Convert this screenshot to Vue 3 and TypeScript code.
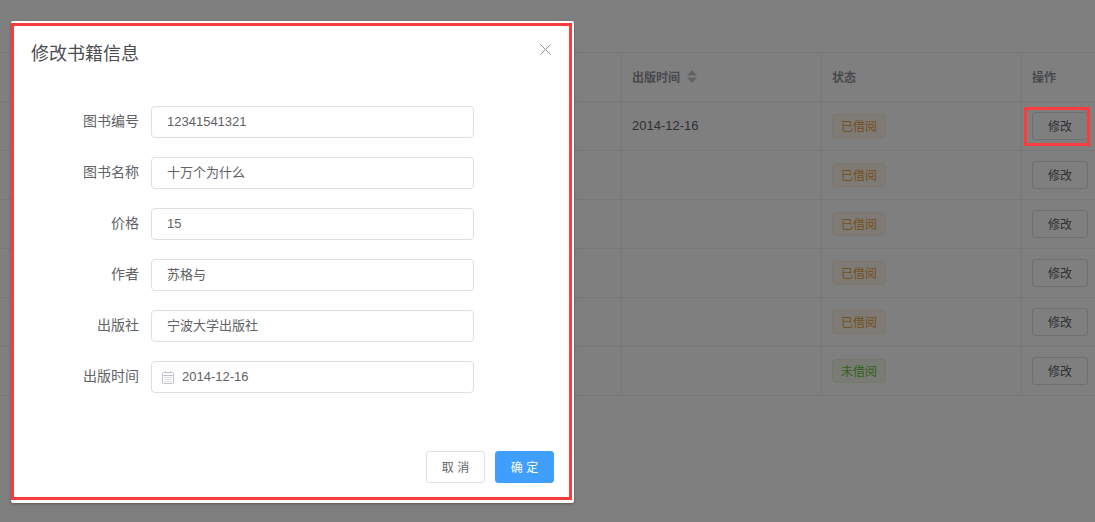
<script setup lang="ts">
interface Row { date: string; status: string; free: boolean }
const rows: Row[] = [
  { date: '2014-12-16', status: '已借阅', free: false },
  { date: '', status: '已借阅', free: false },
  { date: '', status: '已借阅', free: false },
  { date: '', status: '已借阅', free: false },
  { date: '', status: '已借阅', free: false },
  { date: '', status: '未借阅', free: true },
]
const fields = [
  { label: '图书编号', value: '12341541321', cjk: false },
  { label: '图书名称', value: '十万个为什么', cjk: true },
  { label: '价格', value: '15', cjk: false },
  { label: '作者', value: '苏格与', cjk: true },
  { label: '出版社', value: '宁波大学出版社', cjk: true },
]
</script>

<template>
  <div class="page">
    <div class="table">
      <div class="row head">
        <div class="cell"></div>
        <div class="cell">
          出版时间
          <svg class="sort" width="10" height="13" viewBox="0 0 10 13"><path d="M5 0 10 5.5H0zM5 13 0 7.5h10z" fill="#c0c4cc" /></svg>
        </div>
        <div class="cell">状态</div>
        <div class="cell">操作</div>
      </div>
      <div v-for="(r, i) in rows" :key="i" class="row">
        <div class="cell"></div>
        <div class="cell date">{{ r.date }}</div>
        <div class="cell"><span class="tag" :class="{ free: r.free }">{{ r.status }}</span></div>
        <div class="cell"><button class="edit" type="button">修改</button></div>
      </div>
    </div>

    <div class="mask"></div>

    <section class="dialog">
      <header class="dialog-head">
        <h2>修改书籍信息</h2>
        <svg class="close" width="11" height="11" viewBox="0 0 11 11"><path d="M.5.5l10 10M10.5.5l-10 10" stroke="#909399" stroke-width="1" fill="none" /></svg>
      </header>
      <form class="form">
        <label v-for="f in fields" :key="f.label" class="form-row">
          <span class="form-label">{{ f.label }}</span>
          <input class="input" :class="{ cjk: f.cjk }" :value="f.value" readonly />
        </label>
        <label class="form-row">
          <span class="form-label">出版时间</span>
          <span class="date-input">
            <svg class="cal" width="12" height="13" viewBox="0 0 12 13" fill="none" stroke="#c0c4cc">
              <rect x=".5" y="1.5" width="11" height="11" rx="1" />
              <path d="M.5 4.5h11M3 0v2M9 0v2" />
              <path d="M2.5 6.5h7M2.5 8.5h7M2.5 10.5h7" stroke-dasharray="1 1" />
            </svg>
            <span class="date-text">2014-12-16</span>
          </span>
        </label>
      </form>
      <footer class="dialog-foot">
        <button class="btn" type="button">取 消</button>
        <button class="btn primary" type="button">确 定</button>
      </footer>
    </section>

    <div class="mark mark-dialog"></div>
    <div class="mark mark-edit"></div>
  </div>
</template>

<style>
html, body { margin: 0; padding: 0; background: #fff; overflow: hidden; }
</style>

<style scoped>
.page {
  position: relative;
  width: 1095px;
  height: 522px;
  overflow: hidden;
  background: #fff;
  font-family: "Liberation Sans", "Noto Sans CJK SC", sans-serif;
  color: #606266;
  font-size: 14px;
}
.table {
  padding-top: 52px;
}
.row {
  display: grid;
  grid-template-columns: 622px 200px 200px 73px;
  height: 49px;
  box-sizing: border-box;
  border-bottom: 1px solid #ebeef5;
}
.head {
  height: 50px;
  border-top: 1px solid #ebeef5;
  font-weight: 700;
  color: #909399;
}
.cell {
  display: flex;
  align-items: center;
  box-sizing: border-box;
  padding-left: 10px;
  border-right: 1px solid #ebeef5;
  font-size: 12px;
}
.head .cell { padding-bottom: 2px; }
.row .cell:first-child { padding: 0; }
.row .cell:last-child { border-right: 0; }
.date { color: #606266; font-size: 13px; padding-bottom: 2px; }
.sort { margin-left: 7px; }
.tag {
  display: inline-flex;
  align-items: center;
  justify-content: center;
  box-sizing: border-box;
  width: 54px;
  height: 24px;
  padding-bottom: 2px;
  border: 1px solid #faecd8;
  border-radius: 4px;
  background: #fdf6ec;
  color: #e6a23c;
  font-size: 12px;
}
.tag.free {
  border-color: #e1f3d8;
  background: #f0f9eb;
  color: #67c23a;
}
.edit {
  box-sizing: border-box;
  width: 56px;
  height: 28px;
  padding: 0 0 2px;
  border: 1px solid #dcdfe6;
  border-radius: 3px;
  background: #fff;
  color: #606266;
  font: inherit;
  font-size: 12px;
}
.mask {
  position: absolute;
  inset: 0;
  background: rgba(0, 0, 0, 0.5);
}
.dialog {
  position: absolute;
  left: 11px;
  top: 21px;
  width: 563px;
  height: 482px;
  box-sizing: border-box;
  display: flex;
  flex-direction: column;
  border-radius: 2px;
  background: #fff;
  box-shadow: 0 1px 3px rgba(0, 0, 0, 0.3);
}
.dialog-head {
  position: relative;
  padding: 21px 20px 0;
}
.dialog-head h2 {
  margin: 0;
  font-size: 18px;
  line-height: 24px;
  font-weight: 400;
  color: #4a4c50;
}
.close {
  position: absolute;
  top: 23px;
  right: 23px;
}
.form {
  display: flex;
  flex-direction: column;
  gap: 19px;
  padding-top: 40px;
}
.form-row {
  display: flex;
  align-items: center;
  height: 32px;
}
.form-label {
  box-sizing: border-box;
  width: 128px;
  padding-bottom: 4px;
  text-align: right;
  margin-right: 12px;
  font-size: 14px;
  color: #606266;
}
.input, .date-input {
  box-sizing: border-box;
  width: 323px;
  height: 32px;
  border: 1px solid #dcdfe6;
  border-radius: 4px;
  background: #fff;
  color: #606266;
  font: inherit;
  font-size: 13px;
  outline: none;
}
.input { padding: 0 15px 2px; }
.input.cjk { padding-bottom: 4px; }
.date-input {
  display: flex;
  align-items: center;
  padding-left: 10px;
}
.date-text { padding-bottom: 2px; }
.cal { margin-right: 8px; }
.dialog-foot {
  display: flex;
  justify-content: flex-end;
  gap: 10px;
  margin-top: auto;
  padding: 0 20px 20px 0;
}
.btn {
  box-sizing: border-box;
  width: 59px;
  height: 32px;
  padding: 0 0 2px;
  border: 1px solid #dcdfe6;
  border-radius: 3px;
  background: #fff;
  color: #606266;
  font: inherit;
  font-size: 12px;
}
.btn.primary {
  border-color: #409eff;
  background: #409eff;
  color: #fff;
}
.mark {
  position: absolute;
  box-sizing: border-box;
  border: 3px solid #fa3c3c;
  pointer-events: none;
}
.mark-dialog {
  left: 11px;
  top: 23px;
  width: 561px;
  height: 477px;
}
.mark-edit {
  left: 1024px;
  top: 107px;
  width: 66px;
  height: 39px;
}
</style>
